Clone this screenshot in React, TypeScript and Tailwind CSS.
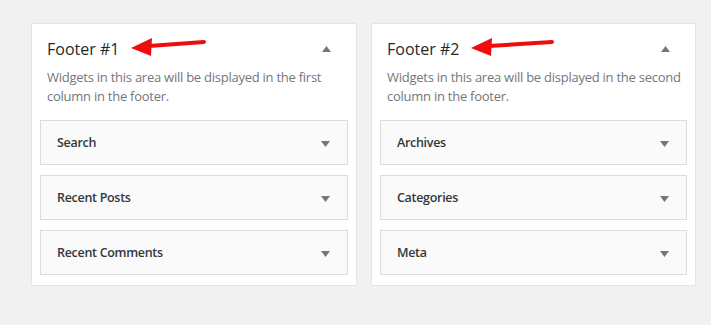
import React from 'react';

const areas = [
  {
    title: 'Footer #1',
    description: 'Widgets in this area will be displayed in the first column in the footer.',
    widgets: ['Search', 'Recent Posts', 'Recent Comments'],
    width: 'w-[326px]',
  },
  {
    title: 'Footer #2',
    description: 'Widgets in this area will be displayed in the second column in the footer.',
    widgets: ['Archives', 'Categories', 'Meta'],
    width: 'w-[325px]',
  },
];

function RedArrow({ tail }: { tail: number }) {
  return (
    <svg className="absolute left-[93px] top-[10px]" width="92" height="26" viewBox="0 0 92 26">
      <line x1="24" y1="12" x2={tail} y2="8" stroke="#f00c0c" strokeWidth="4" strokeLinecap="round" />
      <polygon points="6,14 27,4 26,22" fill="#f00c0c" />
    </svg>
  );
}

function Triangle({ up }: { up?: boolean }) {
  return (
    <svg width="9" height="6" viewBox="0 0 9 6" className="shrink-0">
      <polygon points={up ? '0,6 9,6 4.5,0' : '0,0 9,0 4.5,6'} fill="#72777c" />
    </svg>
  );
}

export default function App() {
  return (
    <div
      className="min-h-screen bg-[#f1f1f1] pt-[23px] pl-[31px]"
      style={{ fontFamily: '"Open Sans", "Noto Sans", sans-serif' }}
    >
      <div className="flex items-start gap-[14px]">
        {areas.map((area, idx) => (
          <div key={idx} className={'relative bg-white border border-[#e2e4e7] ' + area.width}>
            <RedArrow tail={idx === 0 ? 79 : 87} />
            <div className="flex items-center justify-between pt-[13px] pl-[15px] pr-[25px] h-[37px]">
              <h2 className="text-[16px] leading-[24px] font-normal text-[#23282d]">{area.title}</h2>
              <Triangle up />
            </div>
            <p className="mt-[7px] pl-[15px] pr-[8px] text-[13px] leading-[19px] tracking-[-0.25px] text-[#72777c]">
              {area.description}
            </p>
            <div className="mt-[14px] px-[8px] pb-[10px] flex flex-col gap-[10px]">
              {area.widgets.map((w, i) => (
                <div
                  key={i}
                  className="h-[45px] flex items-center justify-between bg-[#fafafa] border border-[#dcdcde] pl-[16px] pr-[17px] pt-[2px]"
                >
                  <span className="text-[12.5px] font-semibold tracking-[-0.3px] text-[#32373c]">{w}</span>
                  <Triangle />
                </div>
              ))}
            </div>
          </div>
        ))}
      </div>
    </div>
  );
}
